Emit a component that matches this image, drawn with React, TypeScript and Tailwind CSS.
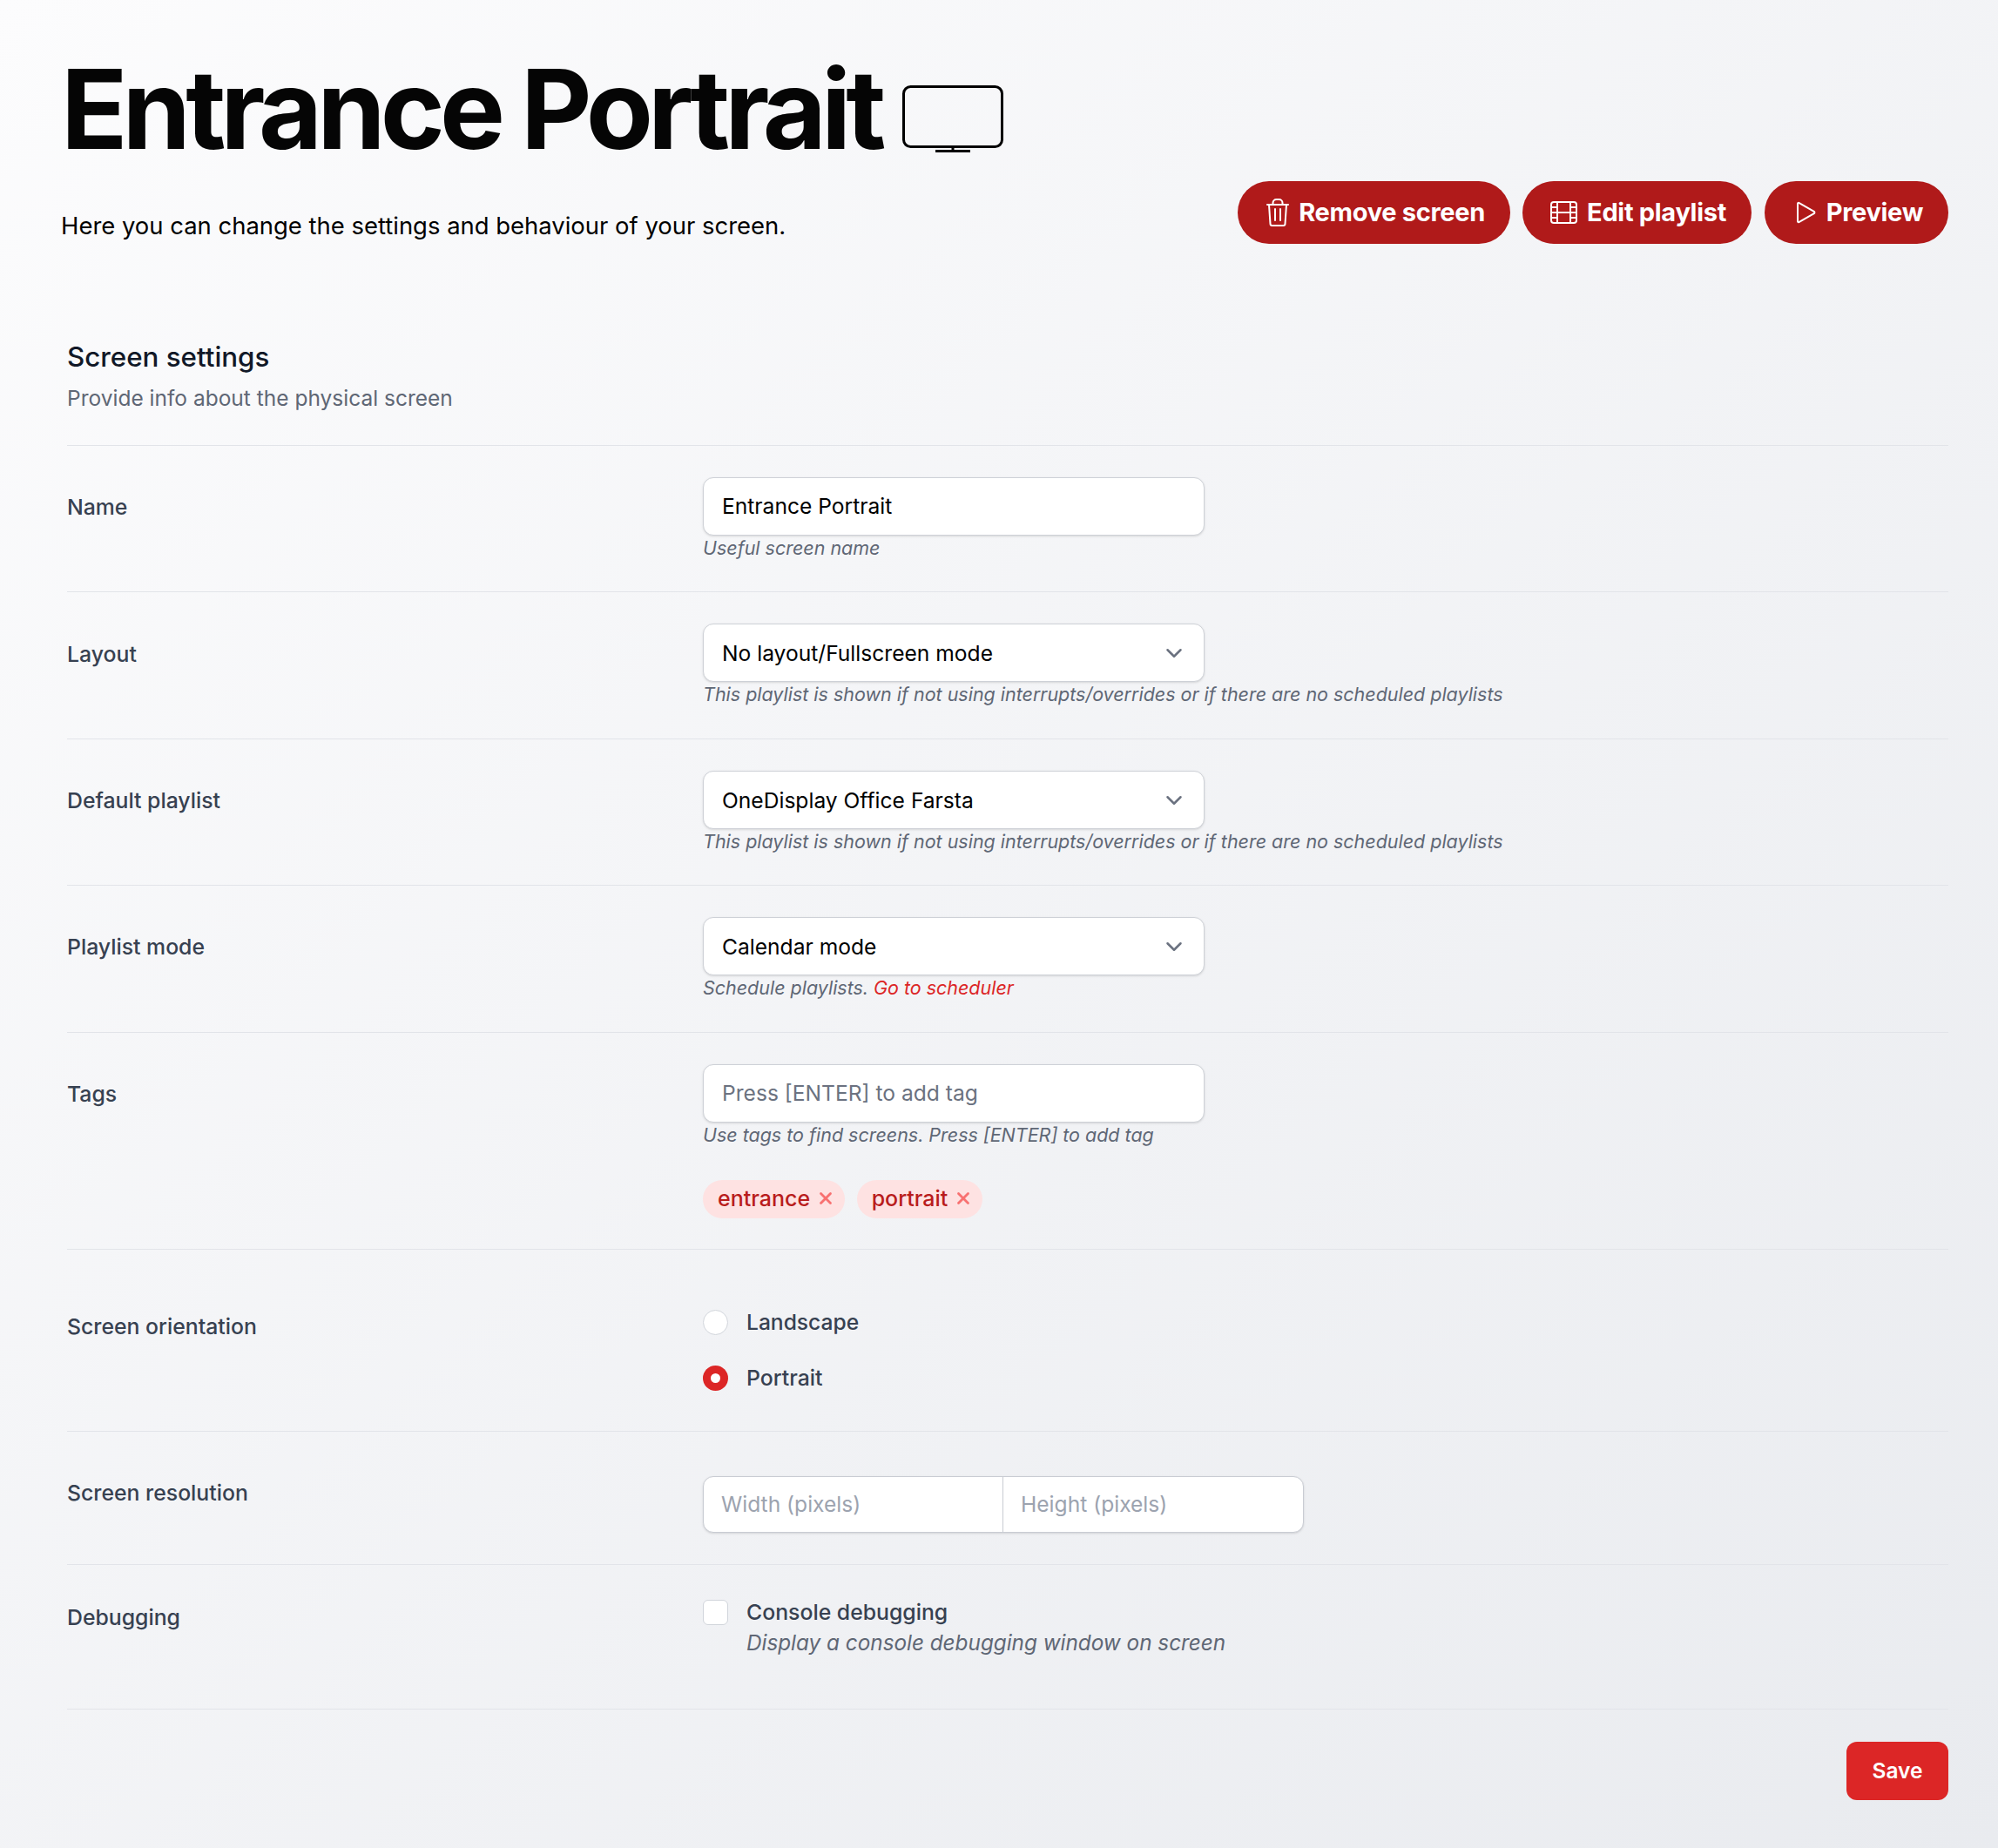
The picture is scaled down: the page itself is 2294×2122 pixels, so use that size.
import React from "react";
import { ChevronDown, X } from "lucide-react";

const MonitorIcon = () => (
  <svg width="116" height="78" viewBox="0 0 116 78" fill="none" stroke="currentColor" strokeWidth="3" className="ml-[25px] mt-[24px] shrink-0">
    <rect x="1.500" y="1.500" width="113" height="69" rx="8" />
    <path d="M58 71v4M38 75.500h40" />
  </svg>
);

const TrashIcon = () => (
  <svg width="26" height="32" viewBox="0 0 26 32" fill="none" stroke="currentColor" strokeWidth="2" strokeLinecap="round" strokeLinejoin="round">
    <path d="M1 7h24M3 7l1.500 22a2 2 0 0 0 2 2h13a2 2 0 0 0 2-2L23 7M7.500 7V5a4 4 0 0 1 4-4h3a4 4 0 0 1 4 4v2M10 12v13M16 12v13" />
  </svg>
);

const FilmIcon = () => (
  <svg width="31" height="26" viewBox="0 0 31 26" fill="none" stroke="currentColor" strokeWidth="2" strokeLinejoin="round">
    <rect x="1" y="1" width="29" height="24" rx="3" />
    <path d="M8 1v24M23 1v24M8 13h15M1 7h7M1 13h7M1 19h7M23 7h7M23 13h7M23 19h7" />
  </svg>
);

const PlayIcon = () => (
  <svg width="24" height="26" viewBox="0 0 24 26" fill="none" stroke="currentColor" strokeWidth="2" strokeLinejoin="round">
    <path d="M2 3v20c0 1 1 1.500 1.800.9l17-9.800c.8-.5.8-1.700 0-2.200L3.800 2.100C3 1.500 2 2 2 3z" />
  </svg>
);

const PillButton = ({ icon, label, className }: { icon: React.ReactNode; label: string; className: string }) => (
  <button className={`h-[72px] rounded-full bg-[#b01a1a] text-white font-bold text-[29px] tracking-[-0.3px] flex items-center justify-end gap-[11px] pr-[29px] ${className}`}>
    {icon}
    {label}
  </button>
);

const Row = ({ label, children, className, labelClass }: { label: string; children: React.ReactNode; className: string; labelClass: string }) => (
  <div className={`grid grid-cols-[730px_1fr] border-t border-[#e2e4e9] ${className}`}>
    <div className={`text-[24.800px] leading-[36px] font-medium text-[#374151] ${labelClass}`}>{label}</div>
    <div>{children}</div>
  </div>
);

const Help = ({ children }: { children: React.ReactNode }) => (
  <p className="mt-[1px] text-[21.470px] leading-[26px] italic text-[#5f6775]">{children}</p>
);

const TextBox = ({ value, placeholder }: { value?: string; placeholder?: string }) => (
  <div className={`h-[67px] w-[576px] rounded-xl border border-[#ced1d7] bg-white shadow-sm flex items-center px-[21px] text-[24.600px] ${value ? "text-black" : "text-[#6b7280]"}`}>
    {value ?? placeholder}
  </div>
);

const SelectBox = ({ value }: { value: string }) => (
  <div className="h-[67px] w-[576px] rounded-xl border border-[#ced1d7] bg-white shadow-sm flex items-center justify-between pl-[21px] pr-[19px] text-[24.600px] text-black">
    <span className="pt-[1px]">{value}</span>
    <ChevronDown size={30} strokeWidth={2} className="text-[#6b7280]" />
  </div>
);

const Tag = ({ label }: { label: string }) => (
  <span className="h-[44px] rounded-full bg-[#fee2e2] pl-[17px] pr-[11px] flex items-center gap-[6.500px] text-[25px] font-medium text-[#b91c1c]">
    {label}
    <X size={22} strokeWidth={3} className="text-[#f87171] -mt-0.5" />
  </span>
);

export default function App() {
  return (
    <div className="min-h-[2122px] bg-gradient-to-br from-[#fcfcfd] to-[#e9ebef] pl-[70px] pr-[57px] pt-[56px] font-['Inter',sans-serif]">
      <div className="flex items-center h-[138px]">
        <h1 className="text-[126px] leading-[138px] font-bold tracking-[-0.047em] text-[#050505]">Entrance Portrait</h1>
        <MonitorIcon />
      </div>
      <div className="flex items-start justify-between mt-[14px]">
        <p className="mt-[31px] text-[27.450px] leading-[40px] text-black">Here you can change the settings and behaviour of your screen.</p>
        <div className="flex">
          <PillButton className="w-[313px]" icon={<TrashIcon />} label="Remove screen" />
          <PillButton className="ml-[14px] w-[263px]" icon={<FilmIcon />} label="Edit playlist" />
          <PillButton className="ml-[15px] w-[211px]" icon={<PlayIcon />} label="Preview" />
        </div>
      </div>

      <div className="ml-[7px] mt-[110px]">
        <h2 className="text-[31.300px] leading-[40px] font-medium text-[#111827]">Screen settings</h2>
        <p className="mt-[9px] mb-[36px] text-[24.500px] leading-[36px] text-[#5f6775]">Provide info about the physical screen</p>

        <Row label="Name" labelClass="pt-[16px]" className="h-[168px] pt-[36px]">
          <TextBox value="Entrance Portrait" />
          <Help>Useful screen name</Help>
        </Row>
        <Row label="Layout" labelClass="pt-[17px]" className="h-[169px] pt-[36px]">
          <SelectBox value="No layout/Fullscreen mode" />
          <Help>This playlist is shown if not using interrupts/overrides or if there are no scheduled playlists</Help>
        </Row>
        <Row label="Default playlist" labelClass="pt-[16px]" className="h-[168px] pt-[36px]">
          <SelectBox value="OneDisplay Office Farsta" />
          <Help>This playlist is shown if not using interrupts/overrides or if there are no scheduled playlists</Help>
        </Row>
        <Row label="Playlist mode" labelClass="pt-[16px]" className="h-[169px] pt-[36px]">
          <SelectBox value="Calendar mode" />
          <Help>
            Schedule playlists. <span className="text-[#dc2626]">Go to scheduler</span>
          </Help>
        </Row>
        <Row label="Tags" labelClass="pt-[16px]" className="h-[249px] pt-[36px]">
          <TextBox placeholder="Press [ENTER] to add tag" />
          <Help>Use tags to find screens. Press [ENTER] to add tag</Help>
          <div className="flex gap-[14px] mt-[39px]">
            <Tag label="entrance" />
            <Tag label="portrait" />
          </div>
        </Row>
        <Row label="Screen orientation" labelClass="pt-[5px]" className="h-[209px] pt-[65px]">
          <div className="flex flex-col gap-[28px]">
            <label className="flex items-center gap-[21px] text-[24.600px] leading-[36px] font-medium text-[#374151]">
              <span className="size-[29px] rounded-full border border-[#d1d5db] bg-white" />
              Landscape
            </label>
            <label className="flex items-center gap-[21px] text-[24.800px] leading-[36px] font-medium text-[#374151]">
              <span className="size-[29px] rounded-full bg-[#dc2626] flex items-center justify-center">
                <span className="size-[11px] rounded-full bg-white" />
              </span>
              Portrait
            </label>
          </div>
        </Row>
        <Row label="Screen resolution" labelClass="pt-[1px]" className="h-[153px] pt-[51px]">
          <div className="flex h-[65px] w-[690px] rounded-xl border border-[#c9ccd3] bg-white shadow-sm text-[24.600px] text-[#9ca3af]">
            <div className="w-[344px] border-r border-[#c9ccd3] flex items-center px-[20px]">Width (pixels)</div>
            <div className="flex items-center px-[20px]">Height (pixels)</div>
          </div>
        </Row>
        <Row label="Debugging" labelClass="pt-[6px]" className="h-[166px] pt-[36px]">
          <div className="flex gap-[21px]">
            <span className="size-[29px] mt-[4px] rounded-md border border-[#d1d5db] bg-white shrink-0" />
            <div>
              <div className="text-[24.800px] leading-[36px] font-medium text-[#374151]">Console debugging</div>
              <div className="text-[24.300px] leading-[35px] italic text-[#5f6775]">Display a console debugging window on screen</div>
            </div>
          </div>
        </Row>
        <div className="border-t border-[#e2e4e9] pt-[37px] flex justify-end">
          <button className="h-[67px] w-[117px] rounded-xl bg-[#dc2626] text-white text-[24.500px] font-semibold">Save</button>
        </div>
      </div>
    </div>
  );
}
